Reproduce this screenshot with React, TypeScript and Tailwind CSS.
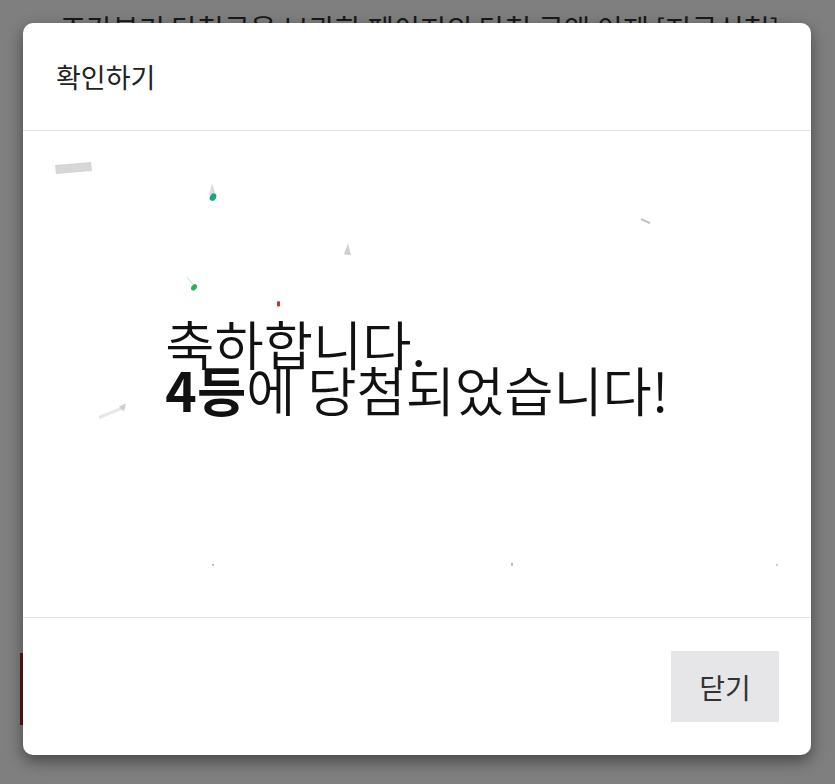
import React from "react";

const font = { fontFamily: '"Noto Sans CJK KR", "Noto Sans", sans-serif' };

function Confetti() {
  return (
    <svg
      className="pointer-events-none absolute inset-0 h-full w-full"
      viewBox="0 0 788 485"
      preserveAspectRatio="none"
    >
      <path d="M32 34 L68 31 L69 40 L33 43 Z" fill="#cfcfcf" opacity="0.85" />
      <path d="M189 52 L193 64 L186 64 Z" fill="#dcdcdc" />
      <ellipse cx="190" cy="66" rx="3" ry="4" transform="rotate(30 190 66)" fill="#1aa58a" />
      <path d="M325 112 L328 124 L321 123 Z" fill="#cfcfcf" />
      <ellipse cx="171" cy="156" rx="2.5" ry="3.5" transform="rotate(40 171 156)" fill="#2fae5a" />
      <path d="M164 146 L170 153" stroke="#cfe9d6" strokeWidth="1" />
      <rect x="254" y="170" width="3" height="5" fill="#c0392b" />
      <path d="M618 88 L627 92" stroke="#bdbdbd" strokeWidth="2" />
      <path d="M76 286 L100 276" stroke="#e6e6e6" strokeWidth="3" />
      <path d="M96 275 L103 272 L101 280 Z" fill="#cfcfcf" />
      <rect x="189" y="432" width="2" height="2" fill="#bbbbbb" />
      <rect x="488" y="431" width="2" height="3" fill="#bbbbbb" />
      <rect x="753" y="432" width="2" height="2" fill="#cccccc" />
    </svg>
  );
}

export default function App() {
  return (
    <div className="relative h-[784px] w-[835px] overflow-hidden bg-white" style={font}>
      {/* background page */}
      <div className="flex flex-col pl-[60px] pt-[10px]">
        <p className="whitespace-nowrap text-[28.5px] leading-[36px] text-[#333]">
          조각분기 당첨금을 보관한 페이지의 당첨 금액 이제 [지금신청]
        </p>
        <div className="mt-[607px] flex">
          <div className="ml-[-40px] h-[72px] w-[40px] bg-[#b5351f]" />
        </div>
      </div>

      {/* overlay */}
      <div className="absolute inset-0 bg-black/50" />

      {/* modal */}
      <div className="absolute left-[23px] top-[23px] flex h-[732px] w-[788px] flex-col overflow-hidden rounded-[10px] bg-white shadow-[0_6px_16px_rgba(0,0,0,0.45)]">
        <div className="flex h-[108px] shrink-0 items-center border-b border-[#e3e3e3] px-[33px]">
          <h2 className="text-[27px] font-normal leading-none text-[#222]">확인하기</h2>
        </div>
        <div className="relative flex flex-1 items-center justify-center pb-[16px]">
          <Confetti />
          <div className="relative text-[53.5px] font-[350] leading-[46px] text-[#111]">
            <p>축하합니다.</p>
            <p>
              <strong className="font-bold">4등</strong>에 당첨되었습니다!
            </p>
          </div>
        </div>
        <div className="flex h-[138px] shrink-0 items-start justify-end border-t border-[#e3e3e3] pr-[32px] pt-[33px]">
          <button className="flex h-[71px] w-[108px] items-center justify-center bg-[#e6e6e8] text-[28px] text-[#333]">
            닫기
          </button>
        </div>
      </div>
    </div>
  );
}
